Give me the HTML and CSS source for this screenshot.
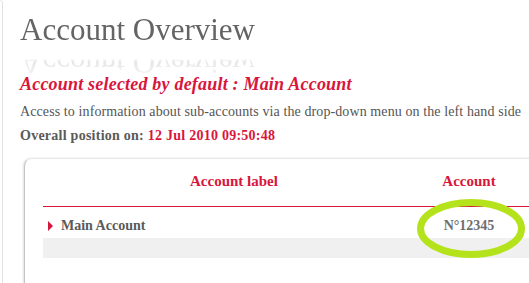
FILE: index.html
```html
<!DOCTYPE html>
<html>
<head>
<meta charset="utf-8">
<link rel="stylesheet" href="styles.css">
</head>
<body>
<div class="page">
  <div class="side"></div>
  <div class="main">
    <h1 class="title">Account Overview</h1>
    <h2 class="subtitle">Account selected by default : Main Account</h2>
    <p class="info">Access to information about sub-accounts via the drop-down menu on the left hand side</p>
    <p class="position">Overall position on: <span class="date">12 Jul 2010 09:50:48</span></p>
    <div class="card">
      <div class="table">
        <div class="thead">
          <div class="th">Account label</div>
          <div class="th">Account</div>
          <div class="th"></div>
        </div>
        <div class="row">
          <div class="td label"><span class="arrow"></span>Main Account</div>
          <div class="td num">N°12345</div>
          <div class="td"></div>
        </div>
        <div class="band"></div>
      </div>
      <svg class="circle" width="108" height="59" viewBox="0 0 108 59">
        <ellipse cx="54" cy="29.5" rx="50.5" ry="26" fill="none" stroke="#b5e31b" stroke-width="7"/>
      </svg>
    </div>
  </div>
</div>
</body>
</html>
```
FILE: styles.css
```css
html, body {
  margin: 0;
  padding: 0;
  background: #fff;
}
body {
  font-family: "Liberation Serif", "Times New Roman", serif;
  overflow: hidden;
}
.page {
  display: flex;
  min-height: 283px;
}
.side {
  width: 2px;
  flex: none;
  border-right: 1px solid #e2e2e2;
  border-top: 1px solid #eeeeee;
  border-top-right-radius: 3px;
}
.main {
  flex: 1;
  padding: 12px 0 0 17px;
  min-width: 0;
}
.title {
  margin: 0;
  font-size: 31px;
  line-height: 36px;
  font-weight: normal;
  color: #646464;
  -webkit-box-reflect: below -4px linear-gradient(to bottom, rgba(0,0,0,0.04), rgba(0,0,0,0.16) 50%, transparent 60%);
}
.subtitle {
  margin: 26px 0 0;
  font-size: 18px;
  line-height: 20px;
  letter-spacing: 0.2px;
  font-weight: bold;
  font-style: italic;
  color: #d8163c;
}
.info {
  margin: 10px 0 0;
  font-size: 14px;
  line-height: 16px;
  letter-spacing: 0.1px;
  color: #555555;
  white-space: nowrap;
}
.position {
  margin: 8px 0 0;
  font-size: 14px;
  line-height: 16px;
  letter-spacing: 0.25px;
  font-weight: bold;
  color: #5a5a5a;
}
.date {
  color: #d8163c;
}
.card {
  position: relative;
  margin: 14px -30px 0 4px;
  border-top: 1px solid #e6e6e6;
  border-left: 1px solid #c4c4c4;
  border-top-left-radius: 8px;
  box-shadow: -1px 0 2px rgba(0,0,0,0.12);
  padding: 0 0 40px 18px;
}
.thead, .row {
  display: grid;
  grid-template-columns: 382px 88px 1fr;
}
.thead {
  border-bottom: 1px solid #d8163c;
}
.th {
  padding: 14px 0 17px;
  font-size: 15px;
  line-height: 16px;
  font-weight: bold;
  color: #d8163c;
  text-align: center;
}
.td {
  padding: 11px 0 4px;
  font-size: 14px;
  line-height: 16px;
  font-weight: bold;
}
.label {
  display: flex;
  align-items: center;
  padding-left: 5px;
  color: #5a5a5a;
}
.arrow {
  width: 0;
  height: 0;
  border-top: 5px solid transparent;
  border-bottom: 5px solid transparent;
  border-left: 5px solid #d8163c;
  margin-right: 8px;
}
.num {
  text-align: center;
  color: #6e6e6e;
}
.band {
  height: 20px;
  background: #f0f0f0;
}
.circle {
  position: absolute;
  left: 392px;
  top: 40px;
}
```
